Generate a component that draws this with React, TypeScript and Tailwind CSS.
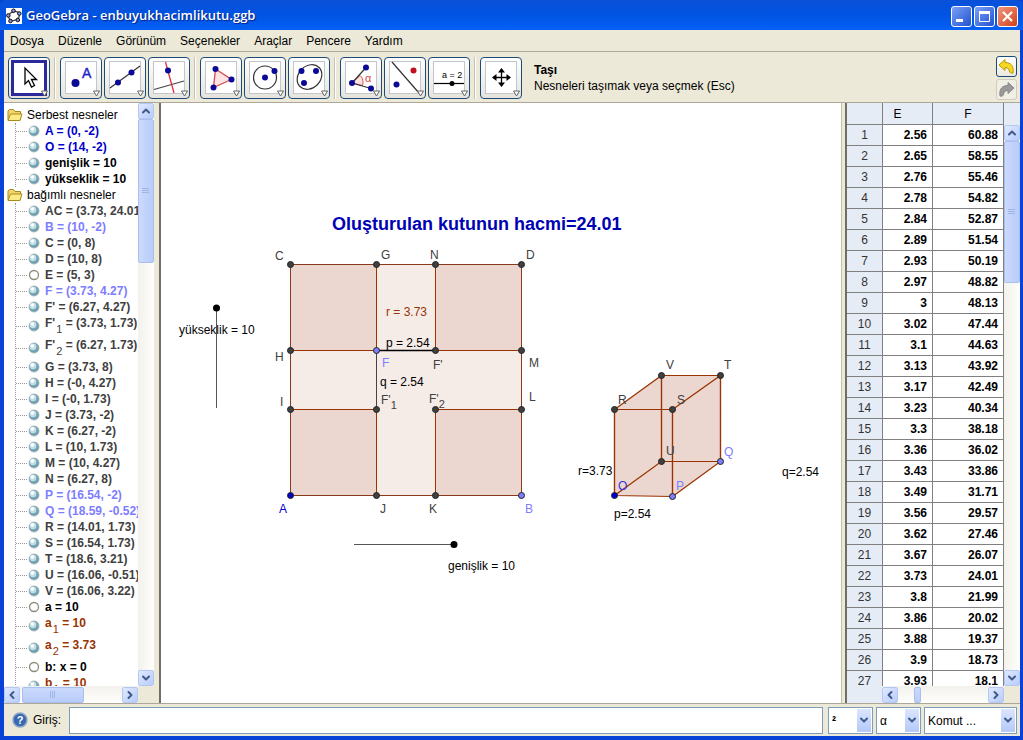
import type { ReactNode } from "react"
import { ChevronDown, ChevronLeft, ChevronRight, ChevronUp } from "lucide-react"

type Tone = "free" | "black" | "gray" | "path" | "brown"

interface TreeItem {
  name: string
  sub?: string
  value: string
  tone: Tone
  hidden?: boolean
}

const tones: Record<Tone, string> = {
  free: "text-[#0000cc]",
  black: "text-black",
  gray: "text-[#404040]",
  path: "text-[#7d7dff]",
  brown: "text-[#993300]",
}

const menus = ["Dosya", "Düzenle", "Görünüm", "Seçenekler", "Araçlar", "Pencere", "Yardım"]

const freeObjects: TreeItem[] = [
  { name: "A", value: " = (0, -2)", tone: "free" },
  { name: "O", value: " = (14, -2)", tone: "free" },
  { name: "genişlik", value: " = 10", tone: "black" },
  { name: "yükseklik", value: " = 10", tone: "black" },
]

const dependentObjects: TreeItem[] = [
  { name: "AC", value: " = (3.73, 24.01)", tone: "gray" },
  { name: "B", value: " = (10, -2)", tone: "path" },
  { name: "C", value: " = (0, 8)", tone: "gray" },
  { name: "D", value: " = (10, 8)", tone: "gray" },
  { name: "E", value: " = (5, 3)", tone: "gray", hidden: true },
  { name: "F", value: " = (3.73, 4.27)", tone: "path" },
  { name: "F'", value: " = (6.27, 4.27)", tone: "gray" },
  { name: "F'", sub: "1", value: " = (3.73, 1.73)", tone: "gray" },
  { name: "F'", sub: "2", value: " = (6.27, 1.73)", tone: "gray" },
  { name: "G", value: " = (3.73, 8)", tone: "gray" },
  { name: "H", value: " = (-0, 4.27)", tone: "gray" },
  { name: "I", value: " = (-0, 1.73)", tone: "gray" },
  { name: "J", value: " = (3.73, -2)", tone: "gray" },
  { name: "K", value: " = (6.27, -2)", tone: "gray" },
  { name: "L", value: " = (10, 1.73)", tone: "gray" },
  { name: "M", value: " = (10, 4.27)", tone: "gray" },
  { name: "N", value: " = (6.27, 8)", tone: "gray" },
  { name: "P", value: " = (16.54, -2)", tone: "path" },
  { name: "Q", value: " = (18.59, -0.52)", tone: "path" },
  { name: "R", value: " = (14.01, 1.73)", tone: "gray" },
  { name: "S", value: " = (16.54, 1.73)", tone: "gray" },
  { name: "T", value: " = (18.6, 3.21)", tone: "gray" },
  { name: "U", value: " = (16.06, -0.51)", tone: "gray" },
  { name: "V", value: " = (16.06, 3.22)", tone: "gray" },
  { name: "a", value: " = 10", tone: "black", hidden: true },
  { name: "a", sub: "1", value: " = 10", tone: "brown" },
  { name: "a", sub: "2", value: " = 3.73", tone: "brown" },
  { name: "b", value: ": x = 0", tone: "black", hidden: true },
  { name: "b", sub: "1", value: " = 10", tone: "brown" },
]

const cells: [string, string][] = [
  ["2.56", "60.88"],
  ["2.65", "58.55"],
  ["2.76", "55.46"],
  ["2.78", "54.82"],
  ["2.84", "52.87"],
  ["2.89", "51.54"],
  ["2.93", "50.19"],
  ["2.97", "48.82"],
  ["3", "48.13"],
  ["3.02", "47.44"],
  ["3.1", "44.63"],
  ["3.13", "43.92"],
  ["3.17", "42.49"],
  ["3.23", "40.34"],
  ["3.3", "38.18"],
  ["3.36", "36.02"],
  ["3.43", "33.86"],
  ["3.49", "31.71"],
  ["3.56", "29.57"],
  ["3.62", "27.46"],
  ["3.67", "26.07"],
  ["3.73", "24.01"],
  ["3.8", "21.99"],
  ["3.86", "20.02"],
  ["3.88", "19.37"],
  ["3.9", "18.73"],
  ["3.93", "18.1"],
]

const NAVY = "#0a0a96"

const toolGroups: { label: string; icon: ReactNode; active?: boolean }[][] = [
  [
    {
      label: "Taşı",
      active: true,
      icon: <path d="M17 11V27L20.5 23.5L23.5 30L26.5 28.5L23.5 22.5H28.5Z" fill="#fff" stroke="#000" strokeWidth="1.3" />,
    },
  ],
  [
    {
      label: "Nokta",
      icon: (
        <>
          <circle cx="15.5" cy="26" r="4" fill={NAVY} />
          <text x="22" y="21" fontSize="14" fill="#2222cc" stroke="#2222cc" strokeWidth="0.4">
            A
          </text>
        </>
      ),
    },
    {
      label: "Doğru",
      icon: (
        <>
          <path d="M6 31L36 9" stroke="#333" strokeWidth="1.2" />
          <circle cx="14" cy="25.5" r="3" fill={NAVY} />
          <circle cx="27.5" cy="15.5" r="3" fill={NAVY} />
        </>
      ),
    },
    {
      label: "Dik doğru",
      icon: (
        <>
          <path d="M6 32.5L36 24" stroke="#444" strokeWidth="1.2" />
          <path d="M17.5 5L26 36" stroke="#e03040" strokeWidth="1.3" />
          <circle cx="20" cy="13.5" r="3" fill={NAVY} />
        </>
      ),
    },
  ],
  [
    {
      label: "Çokgen",
      icon: (
        <>
          <path d="M15.5 12L31.5 22.5L13.5 30.5Z" fill="#fde3e3" stroke="#d84a4a" strokeWidth="1.3" />
          <circle cx="15.5" cy="12" r="3" fill={NAVY} />
          <circle cx="31.5" cy="22.5" r="3" fill={NAVY} />
          <circle cx="13.5" cy="30.5" r="3" fill={NAVY} />
        </>
      ),
    },
    {
      label: "Çember",
      icon: (
        <>
          <circle cx="21" cy="20.5" r="11.5" fill="none" stroke="#333" strokeWidth="1.2" />
          <circle cx="21" cy="20.5" r="3" fill={NAVY} />
          <circle cx="30.5" cy="14" r="3" fill={NAVY} />
        </>
      ),
    },
    {
      label: "Elips",
      icon: (
        <>
          <ellipse cx="21.5" cy="20" rx="13.5" ry="11" transform="rotate(-45 21.5 20)" fill="none" stroke="#333" strokeWidth="1.2" />
          <circle cx="13.5" cy="14" r="3" fill={NAVY} />
          <circle cx="28" cy="14" r="3" fill={NAVY} />
          <circle cx="16" cy="26" r="3" fill={NAVY} />
        </>
      ),
    },
  ],
  [
    {
      label: "Açı",
      icon: (
        <>
          <path d="M12 26L20 18.5C23 21 23.5 25 22.5 28.5Z" fill="#fde3e3" stroke="#d84a4a" />
          <path d="M26 10.5L12 26L31 31.5" fill="none" stroke="#333" strokeWidth="1.2" />
          <circle cx="26" cy="10.5" r="3" fill={NAVY} />
          <circle cx="12" cy="26" r="3" fill={NAVY} />
          <circle cx="31" cy="31.5" r="3" fill={NAVY} />
          <text x="25" y="25" fontSize="11" fill="#d84a4a">
            α
          </text>
        </>
      ),
    },
    {
      label: "Yansıtma",
      icon: (
        <>
          <path d="M8 5L35 36" stroke="#333" strokeWidth="1.2" />
          <circle cx="29.5" cy="13.5" r="3" fill="#c01020" />
          <circle cx="12.5" cy="27.5" r="3" fill={NAVY} />
        </>
      ),
    },
    {
      label: "Sürgü",
      icon: (
        <>
          <text x="14" y="21" fontSize="9" fill="#000">
            a = 2
          </text>
          <path d="M6 26.5H36" stroke="#000" strokeWidth="1.2" />
          <circle cx="24" cy="26.5" r="2.5" fill="#000" />
        </>
      ),
    },
  ],
  [
    {
      label: "Çizim tahtasını taşı",
      icon: (
        <>
          <path d="M21.5 12V29M13 20.5H30" stroke="#000" strokeWidth="1.3" />
          <path d="M21.5 11L25 15.5H18ZM21.5 30L25 25.5H18ZM12 20.5L16.5 17V24ZM31 20.5L26.5 17V24Z" fill="#000" />
        </>
      ),
    },
  ],
]

// world -> canvas coordinates
const sx = (x: number) => Math.round(129.3 + x * 23.1) + 0.5
const sy = (y: number) => Math.round(346.1 - y * 23.15) + 0.5

const P: Record<string, [number, number]> = {
  A: [0, -2],
  B: [10, -2],
  C: [0, 8],
  D: [10, 8],
  F: [3.73, 4.27],
  "F'": [6.27, 4.27],
  F1: [3.73, 1.73],
  F2: [6.27, 1.73],
  G: [3.73, 8],
  H: [0, 4.27],
  I: [0, 1.73],
  J: [3.73, -2],
  K: [6.27, -2],
  L: [10, 1.73],
  M: [10, 4.27],
  N: [6.27, 8],
  O: [14, -2],
  P: [16.54, -2.03],
  Q: [18.59, -0.52],
  R: [14.01, 1.73],
  S: [16.54, 1.73],
  T: [18.6, 3.21],
  U: [16.06, -0.51],
  V: [16.06, 3.22],
}

const poly = (names: string[]) => names.map((n) => `${sx(P[n][0])},${sy(P[n][1])}`).join(" ")

const cornerSquares = [
  ["C", "G", "F", "H"],
  ["N", "D", "M", "F'"],
  ["I", "F1", "J", "A"],
  ["F2", "L", "B", "K"],
]

const boxEdges = [
  ["R", "S", "P", "O"],
  ["V", "T", "Q", "U"],
  ["R", "V", "U", "O"],
  ["S", "T", "Q", "P"],
]

const pointLabels: { text: string; sub?: string; x: number; y: number; fill?: string }[] = [
  { text: "C", x: 114, y: 157 },
  { text: "G", x: 220, y: 156 },
  { text: "N", x: 269, y: 156 },
  { text: "D", x: 365, y: 156 },
  { text: "H", x: 114, y: 258 },
  { text: "M", x: 368, y: 264 },
  { text: "I", x: 119, y: 303 },
  { text: "L", x: 368, y: 298 },
  { text: "F", x: 221, y: 264, fill: "#7d7dff" },
  { text: "F'", x: 272, y: 266 },
  { text: "F'", sub: "1", x: 220, y: 301 },
  { text: "F'", sub: "2", x: 268, y: 300 },
  { text: "J", x: 219, y: 410 },
  { text: "K", x: 268, y: 410 },
  { text: "A", x: 118, y: 410, fill: "#0000cc" },
  { text: "B", x: 364, y: 410, fill: "#7d7dff" },
  { text: "V", x: 505, y: 266 },
  { text: "T", x: 563, y: 266 },
  { text: "R", x: 457, y: 301 },
  { text: "S", x: 516, y: 301 },
  { text: "U", x: 505, y: 352 },
  { text: "Q", x: 563, y: 353, fill: "#7d7dff" },
  { text: "O", x: 457, y: 387, fill: "#3333dd" },
  { text: "P", x: 515, y: 387, fill: "#7d7dff" },
  { text: "r = 3.73", x: 225, y: 213, fill: "#993300" },
  { text: "p = 2.54", x: 225, y: 244, fill: "#000" },
  { text: "q = 2.54", x: 219, y: 283, fill: "#000" },
  { text: "r=3.73", x: 417, y: 372, fill: "#000" },
  { text: "p=2.54", x: 453, y: 415, fill: "#000" },
  { text: "q=2.54", x: 621, y: 373, fill: "#000" },
  { text: "yükseklik = 10", x: 18, y: 231, fill: "#000" },
  { text: "genişlik = 10", x: 287, y: 467, fill: "#000" },
]

function pointFill(name: string) {
  if (name === "A" || name === "O") return "#0000cc"
  if (["B", "F", "P", "Q"].includes(name)) return "#7d7dff"
  return "#404040"
}

function TitleBar() {
  return (
    <header className="flex h-[30px] shrink-0 items-center justify-between rounded-t-md bg-linear-to-b from-[#0a50d8] via-[#0054e3] to-[#0560f5] pr-[5px] pl-[6px]">
      <div className="flex items-center gap-1 pt-[2px]">
        <svg width="16" height="16" viewBox="0 0 16 16" className="bg-white">
          <ellipse cx="8" cy="8" rx="5.5" ry="4.5" transform="rotate(-20 8 8)" fill="none" stroke="#444" strokeWidth="1.3" />
          <g fill="#8f8fe8" stroke="#111">
            <circle cx="7.5" cy="2.8" r="1.8" />
            <circle cx="13.3" cy="5.5" r="1.8" />
            <circle cx="11.8" cy="12" r="1.8" />
            <circle cx="4.5" cy="13" r="1.8" />
            <circle cx="2.3" cy="7.5" r="1.8" />
          </g>
        </svg>
        <h1 className="font-['Open_Sans',sans-serif] text-[13px] font-semibold text-white [text-shadow:1px_1px_1px_#0a1f80]">
          GeoGebra - enbuyukhacimlikutu.ggb
        </h1>
      </div>
      <div className="flex gap-[2px] pt-[3px]">
        <button aria-label="Simge durumuna küçült" className="size-[21px] rounded-[3px] border border-white bg-linear-to-br from-[#7ba0f5] to-[#2050d0]">
          <svg width="19" height="19">
            <path d="M4 13.5H11" stroke="#fff" strokeWidth="3" />
          </svg>
        </button>
        <button aria-label="Ekranı kapla" className="size-[21px] rounded-[3px] border border-white bg-linear-to-br from-[#7ba0f5] to-[#2050d0]">
          <svg width="19" height="19">
            <path d="M4.5 6V14.5H14.5V6" fill="none" stroke="#fff" />
            <path d="M4 5.5H15" stroke="#fff" strokeWidth="3" />
          </svg>
        </button>
        <button aria-label="Kapat" className="size-[21px] rounded-[3px] border border-white bg-linear-to-br from-[#f0987c] to-[#d03a10]">
          <svg width="19" height="19">
            <path d="M5 5L14 14M14 5L5 14" stroke="#fff" strokeWidth="2.2" />
          </svg>
        </button>
      </div>
    </header>
  )
}

function Toolbar() {
  return (
    <div className="flex h-[51px] shrink-0 items-center justify-between border-b border-[#aca899] pt-[2px] pr-[3px] pl-1">
      <div className="flex items-center">
        {toolGroups.map((group, i) => (
          <div key={i} className="flex items-center">
            {i > 0 && <span className="mx-1 h-[42px] w-[2px] border-r border-l border-r-white border-l-[#c5c2b2]" />}
            <div className="flex gap-[2px]">
              {group.map((tool) => (
                <button key={tool.label} aria-label={tool.label} className="size-[42px] rounded-[4px] border border-[#1c4a7a] bg-linear-to-b from-white to-[#e6e4dc]">
                  <svg width="40" height="40" viewBox="1 1 40 40" fontFamily="Liberation Sans, sans-serif">
                    {tool.active ? (
                      <rect x="4.5" y="4.5" width="33" height="33" fill="#fff" stroke="#2a2a9c" strokeWidth="3" />
                    ) : (
                      <rect x="5.5" y="4.5" width="31" height="32" fill="#fff" stroke="#c4c4cc" />
                    )}
                    {tool.icon}
                    <path d="M33.5 34H39.5L36.5 39Z" fill="#fff" stroke="#666" />
                  </svg>
                </button>
              ))}
            </div>
          </div>
        ))}
        <div className="ml-3 text-[12px] leading-4">
          <p className="font-bold">Taşı</p>
          <p>Nesneleri taşımak veya seçmek (Esc)</p>
        </div>
      </div>
      <div className="flex flex-col gap-[2px]">
        <button aria-label="Geri al" className="size-[21px] rounded-[3px] border border-[#1c4a7a] bg-linear-to-b from-white to-[#ece9e0]">
          <svg width="19" height="19">
            <path d="M2 8L8 2.5V5.5C14 5.5 17 9 16 16C14.5 16.5 13.5 16 12.5 15C12.5 12 11 10.5 8 10.5V13.5Z" fill="#f5d820" stroke="#b8960a" />
          </svg>
        </button>
        <button aria-label="Yinele" className="size-[21px] rounded-[3px] border border-[#d0cdbf] bg-[#f1efe4]">
          <svg width="19" height="19">
            <path d="M17 8L11 2.5V5.5C5 5.5 2 9 3 16C4.5 16.5 5.5 16 6.5 15C6.5 12 8 10.5 11 10.5V13.5Z" fill="#999" stroke="#888" />
          </svg>
        </button>
      </div>
    </div>
  )
}

function ScrollButton({ label, children }: { label: string; children: ReactNode }) {
  return (
    <button
      aria-label={label}
      className="flex size-4 shrink-0 items-center justify-center rounded-[2px] border border-[#b4c8f6] bg-linear-to-br from-[#e0e9ff] to-[#b8ccfa] text-[#42598c]"
    >
      {children}
    </button>
  )
}

function VerticalScroll({ thumb }: { thumb: string }) {
  return (
    <div className="flex flex-col bg-linear-to-r from-[#f3f1ec] to-[#fefefb]">
      <ScrollButton label="Yukarı">
        <ChevronUp size={12} strokeWidth={4} />
      </ScrollButton>
      <div className={`flex w-4 items-center justify-center rounded-[2px] border border-[#a8bff0] bg-linear-to-r from-[#cbdafd] to-[#b9ccf9] ${thumb}`}>
        <svg width="8" height="8">
          <path d="M0 1.5H7M0 3.5H7M0 5.5H7" stroke="#9db4ea" />
        </svg>
      </div>
      <div className="flex-1" />
      <ScrollButton label="Aşağı">
        <ChevronDown size={12} strokeWidth={4} />
      </ScrollButton>
    </div>
  )
}

function HorizontalScroll({ thumb, grip }: { thumb: string; grip?: boolean }) {
  return (
    <div className="flex h-[17px] items-end bg-linear-to-b from-[#f3f1ec] to-[#fefefb]">
      <ScrollButton label="Sola">
        <ChevronLeft size={12} strokeWidth={4} />
      </ScrollButton>
      <div className={`flex h-4 items-center justify-center rounded-[2px] border border-[#a8bff0] bg-linear-to-b from-[#cbdafd] to-[#b9ccf9] ${thumb}`}>
        {grip && (
          <svg width="8" height="8">
            <path d="M1.5 0V7M3.5 0V7M5.5 0V7" stroke="#9db4ea" />
          </svg>
        )}
      </div>
      <div className="flex-1" />
      <ScrollButton label="Sağa">
        <ChevronRight size={12} strokeWidth={4} />
      </ScrollButton>
    </div>
  )
}

function Folder({ title }: { title: string }) {
  return (
    <div className="flex h-4 items-center gap-1 pl-[3px] text-[12px] leading-4">
      <svg width="16" height="14" viewBox="0 0 16 14" className="shrink-0">
        <path d="M1 12V3L2.5 1.5H6.5L8 3.5H13.5V12Z" fill="#f3d667" stroke="#a88a20" />
        <path d="M1 12.5L3.5 6H15L13 12.5Z" fill="#fbea86" stroke="#a88a20" />
      </svg>
      {title}
    </div>
  )
}

function TreeList({ items }: { items: TreeItem[] }) {
  return (
    <ul className="ml-[11px] border-l border-dotted border-[#999]">
      {items.map((item, i) => (
        <li key={i} className={`flex items-center whitespace-nowrap ${item.sub ? "h-[22px]" : "h-4"}`}>
          <span className="w-[11px] shrink-0 border-t border-dotted border-[#999]" />
          <svg width="12" height="12" className="mr-[5px] ml-[1px] shrink-0">
            {item.hidden ? (
              <circle cx="6" cy="6" r="4.5" fill="#fff" stroke="#8c8c7c" strokeWidth="1.3" />
            ) : (
              <>
                <circle cx="6" cy="6" r="5" fill="#6fa3b4" stroke="#9aa8ac" strokeWidth="0.8" />
                <circle cx="5" cy="4.8" r="3.4" fill="#c3e0e6" />
                <circle cx="4.4" cy="4" r="1.7" fill="#fff" />
              </>
            )}
          </svg>
          <span className={`text-[12px] leading-4 font-bold ${item.sub ? "pb-[6px]" : ""} ${tones[item.tone]}`}>
            {item.name}
            {item.sub && <sub className="-bottom-[6px] pl-px text-[11px] font-normal">{item.sub}</sub>}
            {item.value}
          </span>
        </li>
      ))}
    </ul>
  )
}

function AlgebraView() {
  return (
    <aside className="grid w-[150px] shrink-0 grid-cols-[minmax(0,1fr)_16px] grid-rows-[minmax(0,1fr)_17px]">
      <div className="overflow-hidden bg-white pt-1">
        <Folder title="Serbest nesneler" />
        <TreeList items={freeObjects} />
        <Folder title="bağımlı nesneler" />
        <TreeList items={dependentObjects} />
      </div>
      <VerticalScroll thumb="h-[144px]" />
      <HorizontalScroll thumb="ml-[2px] w-[62px]" grip />
    </aside>
  )
}

function GraphicsView() {
  return (
    <main className="min-w-0 flex-1 overflow-hidden bg-white">
      <svg width="100%" height="100%" fontFamily="Liberation Sans, Arial, sans-serif" fontSize="12">
        <polygon points={poly(["C", "D", "B", "A"])} fill="#f5ebe7" />
        <g fill="#ebd7cf" stroke="#993300" strokeWidth="1">
          {cornerSquares.map((names) => (
            <polygon key={names.join("")} points={poly(names)} />
          ))}
        </g>
        <polygon points={poly(["C", "D", "B", "A"])} fill="none" stroke="#8a3a1a" />
        <polyline points={poly(["F", "F1"])} stroke="#444" />
        <polyline points={poly(["F", "F'"])} stroke="#000" strokeWidth="1.5" />

        <polygon points={poly(["R", "V", "T", "Q", "P", "O"])} fill="#ebd7cf" />
        <g fill="none" stroke="#993300" strokeWidth="1.2">
          {boxEdges.map((names) => (
            <polygon key={names.join("")} points={poly(names)} />
          ))}
        </g>

        {Object.entries(P).map(([name, [x, y]]) => (
          <circle key={name} cx={sx(x)} cy={sy(y)} r="3" fill={pointFill(name)} stroke="#222" />
        ))}

        <path d="M55.5 205V305" stroke="#555" />
        <circle cx="55.5" cy="205" r="3.5" />
        <path d="M193 441.5H293" stroke="#555" />
        <circle cx="293" cy="441.5" r="3.5" />

        {pointLabels.map((label, i) => (
          <text key={i} x={label.x} y={label.y} fill={label.fill ?? "#404040"}>
            {label.text}
            {label.sub && (
              <tspan dy="5" fontSize="11">
                {label.sub}
              </tspan>
            )}
          </text>
        ))}
        <text x="171" y="127" fontSize="18" fontWeight="bold" fill="#0000b4">
          Oluşturulan kutunun hacmi=24.01
        </text>
      </svg>
    </main>
  )
}

function SpreadsheetView() {
  return (
    <aside className="grid w-[175px] shrink-0 grid-cols-[35px_minmax(0,1fr)_16px] grid-rows-[22px_minmax(0,1fr)_17px] border-l-2 border-[#716f64] bg-[#ece9d8]">
      <div className="col-span-2 row-span-2 overflow-hidden bg-white">
        <table className="w-full table-fixed border-separate border-spacing-0 text-[12px] leading-4">
          <colgroup>
            <col className="w-[36px]" />
            <col className="w-[50px]" />
            <col />
          </colgroup>
          <thead>
            <tr className="h-[22px] bg-[#e6ecf6]">
              <td className="border-r border-b border-[#808080]" />
              <th className="border-r border-b border-[#808080] p-0 pr-5 font-normal">E</th>
              <th className="border-r border-b border-[#808080] p-0 font-normal">F</th>
            </tr>
          </thead>
          <tbody>
            {cells.map(([e, f], i) => (
              <tr key={i} className="h-[21px]">
                <th className="border-r border-b border-[#808080] bg-[#e6ecf6] p-0 font-normal text-[#333]">{i + 1}</th>
                <td className="border-r border-b border-[#808080] p-0 pr-[5px] text-right font-bold">{e}</td>
                <td className="border-r border-b border-[#808080] p-0 pr-[5px] text-right font-bold">{f}</td>
              </tr>
            ))}
          </tbody>
        </table>
      </div>
      <div className="bg-[#e6ecf6]" />
      <VerticalScroll thumb="h-[142px]" />
      <div className="bg-[#e6ecf6]" />
      <HorizontalScroll thumb="ml-4 w-[7px]" />
    </aside>
  )
}

function Dropdown({ label, value, className }: { label: string; value: string; className: string }) {
  return (
    <div className={`relative h-[27px] border border-[#7f9db9] bg-white ${className}`}>
      <select aria-label={label} className="h-full w-full appearance-none bg-white pl-[3px] text-[12px] outline-none">
        <option>{value}</option>
      </select>
      <span className="pointer-events-none absolute inset-y-px right-px flex w-[14px] items-center justify-center bg-linear-to-b from-[#dbe6ff] to-[#b4c9f8] text-[#42598c]">
        <ChevronDown size={12} strokeWidth={4} />
      </span>
    </div>
  )
}

function InputBar() {
  return (
    <footer className="flex h-[33px] shrink-0 items-center border-t border-[#aca899] pr-[3px] pl-2">
      <svg width="16" height="16" className="mr-[5px] shrink-0">
        <circle cx="8" cy="8" r="7" fill="#3a68b0" stroke="#8fa6c8" strokeWidth="1.5" />
        <text x="8" y="12" fontSize="11" fontWeight="bold" textAnchor="middle" fill="#fff">
          ?
        </text>
      </svg>
      <label htmlFor="giris" className="w-9 text-[12px]">
        Giriş:
      </label>
      <input id="giris" type="text" className="mr-[5px] h-[27px] min-w-0 flex-1 border border-[#7f9db9] bg-white px-1 text-[12px] outline-none" />
      <div className="flex gap-[3px]">
        <Dropdown label="Üs" value="²" className="w-[45px] font-bold" />
        <Dropdown label="Yunan harfi" value="α" className="w-[45px]" />
        <Dropdown label="Komut" value="Komut ..." className="w-[93px]" />
      </div>
    </footer>
  )
}

export default function App() {
  return (
    <div className="flex h-screen flex-col overflow-hidden bg-[#0842d6] font-['Liberation_Sans',Arial,sans-serif] text-black">
      <TitleBar />
      <div className="mr-[3px] mb-[4px] ml-1 flex min-h-0 flex-1 flex-col bg-[#ece9d8]">
        <nav className="flex h-[22px] shrink-0 items-center gap-[14px] border-b border-[#aca899] pl-[6px] text-[12px]">
          {menus.map((menu) => (
            <button key={menu}>{menu}</button>
          ))}
        </nav>
        <Toolbar />
        <div className="flex min-h-0 flex-1">
          <AlgebraView />
          <div className="w-[7px] shrink-0 border-r-2 border-[#716f64] bg-[#ece9d8]" />
          <GraphicsView />
          <div className="w-1 shrink-0 border-l border-[#c5c2b2] bg-[#ece9d8]" />
          <SpreadsheetView />
        </div>
        <InputBar />
      </div>
    </div>
  )
}
